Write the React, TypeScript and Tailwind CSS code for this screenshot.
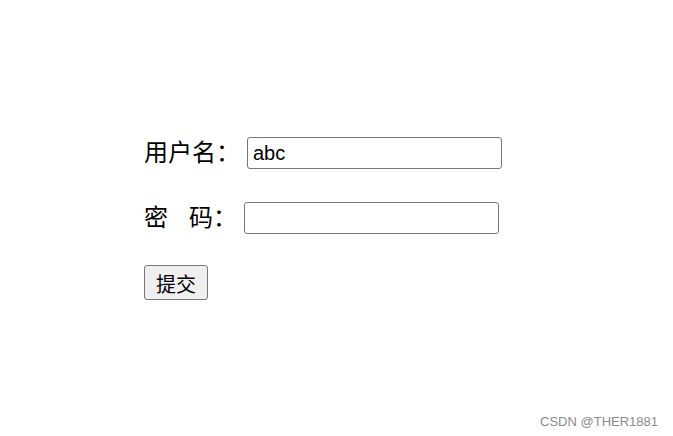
import React from 'react';

const cjk = '"Noto Sans CJK SC", "Liberation Sans", sans-serif';

export default function App() {
  return (
    <div className="relative h-[436px] w-full bg-white text-black">
      <form className="flex flex-col pl-[144px] pt-[137px]" onSubmit={(e) => e.preventDefault()}>
        <div className="flex h-[32px] items-center">
          <span className="w-[103px] pb-[4px] text-[24px] leading-none font-['Noto_Sans_CJK_SC',sans-serif]">用户名：</span>
          <input
            type="text"
            defaultValue="abc"
            className="h-[32px] w-[255px] rounded-[3px] border border-[#767676] px-[5px] text-[20px] font-['Liberation_Sans',Arial,sans-serif] outline-none"
          />
        </div>
        <div className="mt-[33px] flex h-[32px] items-center">
          <span className="flex w-[100px] pb-[4px] text-[24px] leading-none font-['Noto_Sans_CJK_SC',sans-serif]">
            <span className="mr-[21px]">密</span>
            <span>码：</span>
          </span>
          <input
            type="password"
            className="h-[32px] w-[255px] rounded-[3px] border border-[#767676] px-[5px] text-[20px] outline-none"
          />
        </div>
        <div className="mt-[31px]">
          <button
            type="submit"
            className="h-[35px] w-[64px] rounded-[3px] border border-[#767676] bg-[#efefef] pt-[2px] text-[20px] leading-none"
            style={{ fontFamily: cjk }}
          >
            提交
          </button>
        </div>
      </form>
      <div className="absolute right-[15px] bottom-[5px] text-[13px] text-[#8a8a8a] font-['Liberation_Sans',Arial,sans-serif]">
        CSDN @THER1881
      </div>
    </div>
  );
}
